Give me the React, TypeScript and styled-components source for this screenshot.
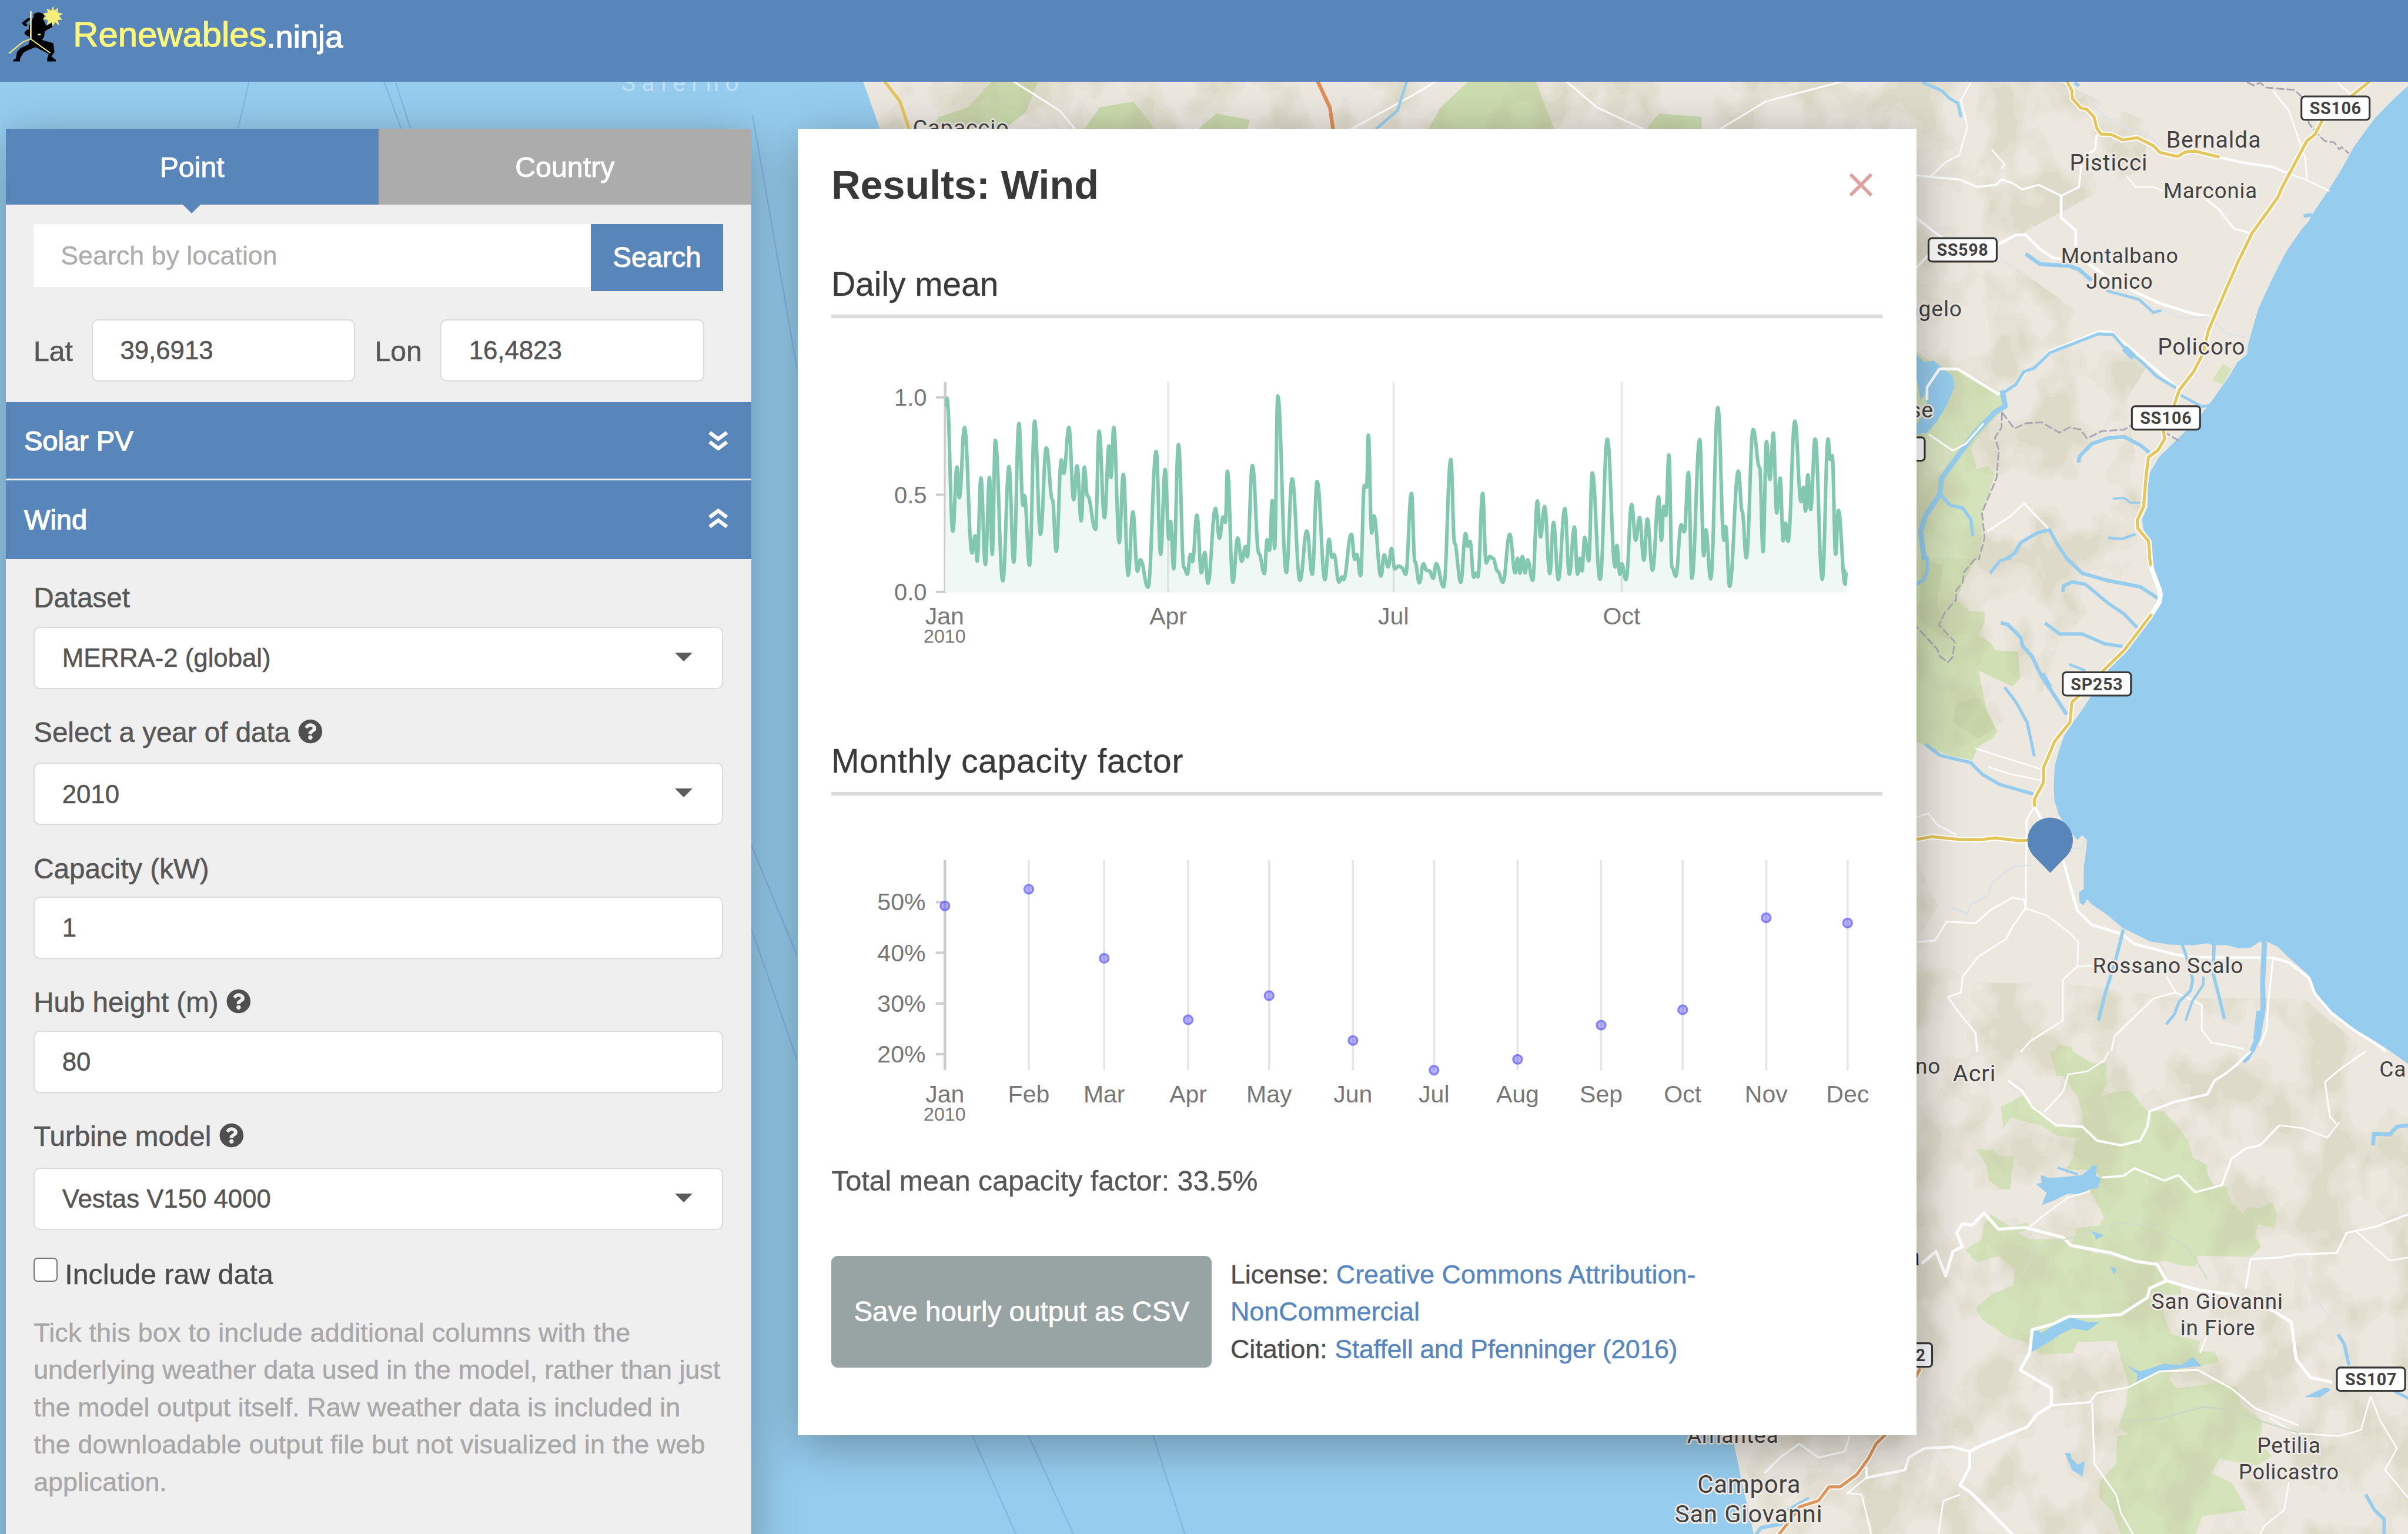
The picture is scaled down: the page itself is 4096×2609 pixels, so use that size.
import React from 'react';
import styled, { createGlobalStyle, css } from 'styled-components';
import { FaQuestionCircle } from 'react-icons/fa';

/* One design unit is 1/1568 of the page width. */
const UNIT = 4096 / 1568;
const u = (n: number) => `${(n * UNIT).toFixed(2)}px`;

const BLUE = '#5886ba';
const SANS = '"Liberation Sans", Arial, sans-serif';
const MAP_FONT = 'Roboto, "Open Sans", sans-serif';

const GlobalStyle = createGlobalStyle`
  * { box-sizing: border-box; }
  html, body { margin: 0; padding: 0; overflow: hidden; }
  body { font-family: ${SANS}; font-size: ${u(18.4)}; line-height: ${u(24.3)}; color: #575757; background: #96cdee; }
`;

const Page = styled.div`
  position: relative;
  width: 4096px;
  height: 2609px;
  overflow: hidden;
  display: flex;
  flex-direction: column;
`;

const MapCanvas = styled.svg`
  position: absolute;
  inset: 0;
  width: 100%;
  height: 100%;
`;

const TopBar = styled.header`
  position: relative;
  flex: none;
  height: ${u(53.2)};
  background: ${BLUE};
  display: flex;
  align-items: flex-start;
`;

const Logo = styled.svg`
  width: ${u(47.6)};
  height: ${u(53.2)};
  flex: none;
`;

const Brand = styled.div`
  padding-top: ${u(7.5)};
  line-height: ${u(30)};
  color: #fbf77c;
  font-size: ${u(22.9)};
  -webkit-text-stroke: ${u(0.45)} #fbf77c;
`;

const BrandSuffix = styled.span`
  position: relative;
  top: ${u(1)};
  color: #fff;
  font-size: ${u(20.8)};
  -webkit-text-stroke: ${u(0.45)} #fff;
`;

const Workspace = styled.main`
  position: relative;
  flex: 1;
  min-height: 0;
  display: flex;
  align-items: flex-start;
  padding: ${u(30.5)} 0 0 ${u(3.7)};
  gap: ${u(30.2)};
`;

const floating = css`
  box-shadow: 0 ${u(7)} ${u(30)} rgba(0, 0, 0, 0.31);
`;

const Sidebar = styled.aside`
  ${floating}
  width: ${u(485.5)};
  height: ${u(940)};
  flex: none;
  background: #efefef;
  display: flex;
  flex-direction: column;
`;

const Tabs = styled.nav`
  display: grid;
  grid-template-columns: 1fr 1fr;
  height: ${u(49.7)};
  flex: none;
`;

const Tab = styled.div<{ $active?: boolean }>`
  position: relative;
  display: flex;
  align-items: center;
  justify-content: center;
  padding-top: ${u(0.6)};
  color: #fff;
  background: ${(p) => (p.$active ? BLUE : '#acacac')};
  font-size: ${u(18.5)};
  -webkit-text-stroke: ${u(0.35)} #fff;
  ${(p) =>
    p.$active &&
    css`
      &::after {
        content: '';
        position: absolute;
        top: 100%;
        left: 50%;
        margin-left: ${u(-5.9)};
        border: ${u(5.9)} solid transparent;
        border-top-color: ${BLUE};
        border-bottom: 0;
      }
    `}
`;

const Location = styled.section`
  padding: ${u(12.4)} ${u(18.4)} ${u(13.7)} ${u(18.1)};
`;

const SearchRow = styled.div`
  display: flex;
  align-items: flex-start;
  margin-bottom: ${u(18.3)};
`;

const SearchField = styled.div`
  flex: 1;
  height: ${u(40.9)};
  padding: 0 ${u(17.7)};
  display: flex;
  align-items: center;
  background: #fff;
  color: #acacac;
  font-size: ${u(17.15)};
  -webkit-text-stroke: ${u(0.1)} #acacac;
`;

const SearchButton = styled.div`
  width: ${u(86)};
  height: ${u(43.7)};
  display: flex;
  align-items: center;
  justify-content: center;
  background: ${BLUE};
  color: #fff;
  font-size: ${u(18.2)};
  -webkit-text-stroke: ${u(0.4)} #fff;
`;

const CoordRow = styled.div`
  display: flex;
  align-items: center;
`;

const CoordLabel = styled.label<{ $width: number; $gap?: number }>`
  width: ${(p) => u(p.$width)};
  margin-left: ${(p) => u(p.$gap ?? 0)};
  padding-top: ${u(1.6)};
  white-space: nowrap;
  -webkit-text-stroke: ${u(0.22)} #575757;
`;

const Field = styled.div<{ $width?: number }>`
  width: ${(p) => (p.$width ? u(p.$width) : '100%')};
  height: ${u(40.5)};
  padding: 0 ${u(18.9)} 0 ${u(17.8)};
  display: flex;
  align-items: center;
  justify-content: space-between;
  background: #fff;
  border: ${u(1.1)} solid #dcdcdc;
  border-radius: ${u(4.2)};
  color: #555;
  font-size: ${u(16.75)};
  -webkit-text-stroke: ${u(0.2)} #555;
`;

const Caret = styled.span`
  border: ${u(5.9)} solid transparent;
  border-top: ${u(6)} solid #5c5c5c;
  border-bottom: 0;
  margin-bottom: ${u(1.3)};
`;

const SectionHead = styled.div<{ $h: number }>`
  height: ${(p) => u(p.$h)};
  flex: none;
  padding: ${u(0.8)} ${u(14.6)} 0 ${u(12)};
  display: flex;
  align-items: center;
  justify-content: space-between;
  background: ${BLUE};
  color: #fff;
  font-size: ${u(18)};
  -webkit-text-stroke: ${u(0.5)} #fff;
  & + & {
    margin-top: ${u(1.4)};
    padding-top: 0;
  }
`;

const ChevronIcon = styled.svg`
  width: ${u(13.6)};
  height: ${u(13.2)};
  margin-top: ${u(-1)};
`;

const Form = styled.section`
  padding: ${u(13)} ${u(18.5)} 0 ${u(18.2)};
`;

const FormGroup = styled.div`
  margin-bottom: ${u(16)};
`;

const Label = styled.label<{ $gap: number }>`
  display: flex;
  align-items: center;
  height: ${u(24.3)};
  margin-bottom: ${(p) => u(p.$gap)};
  gap: ${u(5.3)};
  padding-top: ${u(0.4)};
  font-size: ${u(18.2)};
  white-space: nowrap;
  -webkit-text-stroke: ${u(0.22)} #575757;
  & svg {
    width: ${u(16)};
    height: ${u(16)};
    color: #4f4f4f;
    margin-top: ${u(-1.6)};
  }
`;

const CheckRow = styled.label`
  display: flex;
  align-items: flex-start;
  gap: ${u(4.6)};
  padding-top: ${u(1)};
  color: #4b4b4b;
  font-size: ${u(18.5)};
  -webkit-text-stroke: ${u(0.15)} #4b4b4b;
`;

const CheckBox = styled.span`
  width: ${u(15.7)};
  height: ${u(15.7)};
  margin-top: ${u(1.2)};
  background: #fff;
  border: ${u(1.1)} solid #767676;
  border-radius: ${u(2.6)};
`;

const Help = styled.p`
  margin: ${u(13.5)} 0 0;
  color: #a8a8a8;
  font-size: ${u(17.15)};
  -webkit-text-stroke: ${u(0.2)} #a8a8a8;
`;

const HelpLine = styled.span<{ $track: number }>`
  display: block;
  white-space: nowrap;
  letter-spacing: ${(p) => u(p.$track)};
`;

const Card = styled.section`
  ${floating}
  width: ${u(728.5)};
  height: ${u(850.6)};
  flex: none;
  padding: ${u(21.8)} ${u(22)} 0 ${u(22)};
  background: #fff;
`;

const CardHead = styled.div`
  display: flex;
  align-items: center;
  justify-content: space-between;
  height: ${u(30)};
  padding-right: ${u(6.4)};
  margin-bottom: ${u(38)};
`;

const CardTitle = styled.h2`
  margin: 0;
  font-size: ${u(26.15)};
  font-weight: bold;
  color: #383838;
`;

const CloseIcon = styled.svg`
  width: ${u(15.6)};
  height: ${u(15.6)};
`;

const ChartTitle = styled.h4<{ $track?: number }>`
  margin: 0;
  padding-bottom: ${u(7.5)};
  border-bottom: ${u(2.5)} solid #dadada;
  font-size: ${u(21.75)};
  line-height: ${u(24)};
  letter-spacing: ${(p) => u(p.$track ?? 0)};
  font-weight: normal;
  color: #3a3a3a;
  -webkit-text-stroke: ${u(0.15)} #3a3a3a;
`;

const Chart = styled.svg`
  display: block;
  width: 100%;
  font-family: ${SANS};
`;

const Total = styled.p`
  margin: 0 0 ${u(36.4)};
  font-size: ${u(18.5)};
  -webkit-text-stroke: ${u(0.15)} #575757;
`;

const Actions = styled.div`
  display: flex;
  gap: ${u(12.1)};
`;

const SaveButton = styled.div`
  width: ${u(247.7)};
  height: ${u(72.8)};
  display: flex;
  align-items: center;
  justify-content: center;
  border-radius: ${u(4.2)};
  background: #98a4a3;
  color: #fff;
  font-size: ${u(18.2)};
  -webkit-text-stroke: ${u(0.25)} #fff;
`;

const Credits = styled.div`
  width: ${u(330)};
  color: #4c4c4c;
  font-size: ${u(17.2)};
`;

const CreditLine = styled.div`
  white-space: nowrap;
  -webkit-text-stroke: ${u(0.15)};
`;

const Link = styled.span<{ $track?: number }>`
  color: #5586bf;
  letter-spacing: ${(p) => u(p.$track ?? 0)};
`;

/* ---------- chart data ---------- */

type Pt = [number, number];

const pairs = (s: string): Pt[] => s.trim().split(/\s+/).map((p) => p.split(',').map(Number) as Pt);

const DAILY_FIRST = pairs(`281,250 284,203 301,870 313,548 320,702 335,350 357,978 366,892 372,1020 383,603 396,1036 408,600
416,985 425,415 447,1118 465,545 479,1025 494,330 506,740 510,690 525,1040 540,318 557,885 574,452 592,712 603,970 618,512
625,580 640,350 654,712 664,542 676,818 685,548 694,690 718,860 728,368 744,802 757,442 763,600 771,350 787,926 799,585
813,1090 827,772 840,1070 849,1012 871,1150 895,470 908,985 921,560 932,908 937,820 946,1058 960,435 976,1050 986,1085
995,985 1001,1022 1014,788 1027,1078 1037,975 1046,1130 1068,755 1080,905 1090,798 1097,825 1103,568 1119,1125 1133,903
1145,1020 1156,945 1161,998 1176,540 1195,980 1211,1082 1219,912 1226,965 1234,715 1241,955 1250,192 1275,1076 1292,607
1315,1115 1335,868 1351,1085 1365,620 1388,1112 1400,910 1408,1000 1414,985 1429,1125 1437,1098 1442,1112 1465,885
1475,1010 1481,985 1492,1092 1503,640`);

const DAILY_SECOND = pairs(`7,648 12,388 22,878 28,792 49,1095 58,988 70,1048 80,955 89,1058 101,1043 110,1052 121,1085
138,680 148,1020 161,1128 173,1032 182,1065 190,1068 202,1105 210,1032 232,1148 253,510 264,930 282,1125 296,880 303,945
309,920 320,1100 326,1080 332,1098 346,680 356,1028 367,995 376,1005 390,1070 405,1125 425,885 441,1078 448,1005 455,1080
462,995 470,1078 477,1012 492,1115 506,718 515,898 527,745 542,1082 553,825 567,1112 586,755 599,1085 614,848 623,1085
630,1005 636,1068 644,900 656,1018 666,577 689,1110 710,408 733,1048 738,940 747,1085 752,1032 765,1112 781,735 793,915
804,800 817,1015 827,808 842,1065 860,697 868,915 875,745 881,790 890,487 899,1050 910,1095 926,837 935,872 947,575
957,1105 980,410 992,992 998,862 1012,1108 1033,250 1051,915 1056,845 1067,1145 1093,568 1104,770 1116,1002 1136,360
1155,550 1165,972 1175,420 1185,610 1195,378 1205,778 1215,604 1224,918 1231,828 1238,920 1258,318 1276,722 1283,650
1289,768 1296,587 1304,760 1317,408 1338,1110 1355,408 1361,510 1367,490 1377,985 1385,765 1405,1135 1408,1068`);

const DAILY: Pt[] = [
  ...DAILY_FIRST.map(([x, y]): Pt => [553.45 + x * 0.22293, 233.03 + y * 0.13004]),
  ...DAILY_SECOND.map(([x, y]): Pt => [888.43 + x * 0.22293, 233.03 + y * 0.13004]),
];

/* Eases between turning points so that each of them has a level tangent. */
const smooth = (pts: Pt[]) =>
  pts.reduce((d, [x, y], i) => {
    if (i === 0) return `M${x.toFixed(2)},${y.toFixed(2)}`;
    const [px, py] = pts[i - 1];
    const c = (x - px) * 0.42;
    return `${d}C${(px + c).toFixed(2)},${py.toFixed(2)} ${(x - c).toFixed(2)},${y.toFixed(2)} ${x.toFixed(2)},${y.toFixed(2)}`;
  }, '');

const MONTHS: { name: string; x: number; y: number }[] = [
  { name: 'Jan', x: 615.4, y: 589.7 },
  { name: 'Feb', x: 670, y: 578.8 },
  { name: 'Mar', x: 719.1, y: 623.8 },
  { name: 'Apr', x: 773.8, y: 663.8 },
  { name: 'May', x: 826.5, y: 648.1 },
  { name: 'Jun', x: 881.1, y: 677.3 },
  { name: 'Jul', x: 933.9, y: 696.6 },
  { name: 'Aug', x: 988.3, y: 689.6 },
  { name: 'Sep', x: 1042.7, y: 667.3 },
  { name: 'Oct', x: 1095.8, y: 657.3 },
  { name: 'Nov', x: 1150.2, y: 597.4 },
  { name: 'Dec', x: 1203.2, y: 600.8 },
];

const DailyChart = () => {
  const line = smooth(DAILY);
  return (
    <Chart viewBox="541.4 207.3 684.5 276.7">
      <g fill="#777" fontSize="15.7">
        {[
          ['1.0', 259],
          ['0.5', 322.3],
          ['0.0', 385.6],
        ].map(([t, y]) => (
          <g key={t}>
            <line x1="609.4" x2="615.6" y1={y} y2={y} stroke="#ccc" strokeWidth="1.5" />
            <text x="603.6" y={Number(y) + 5.5} textAnchor="end" fontSize="15.3">
              {t}
            </text>
          </g>
        ))}
        <line x1="615.6" x2="615.6" y1="248.9" y2="386.3" stroke="#ccc" strokeWidth="1.8" />
        <path d={`${line}L1202.8,385.9L615.6,385.9Z`} fill="#eff8f5" />
        {[760.8, 907.6, 1056.1].map((x) => (
          <line key={x} x1={x} x2={x} y1="248.9" y2="385.9" stroke="#000" strokeOpacity="0.09" strokeWidth="1.4" />
        ))}
        <path d={line} fill="none" stroke="#82c8b1" strokeWidth="2.3" strokeLinejoin="round" />
        <g textAnchor="middle">
          <text x="615.2" y="406.6">Jan</text>
          <text x="615.2" y="418.6" fontSize="12.3">2010</text>
          <text x="760.8" y="406.6">Apr</text>
          <text x="907.5" y="406.6">Jul</text>
          <text x="1056.1" y="406.6">Oct</text>
        </g>
      </g>
    </Chart>
  );
};

const MonthlyChart = () => (
  <Chart viewBox="541.4 517.9 684.5 239.2">
    <g fill="#777" fontSize="15.7">
      {[
        ['50%', 587.3],
        ['40%', 620.3],
        ['30%', 653.3],
        ['20%', 686.3],
      ].map(([t, y]) => (
        <g key={t}>
          <line x1="609.4" x2="615.6" y1={y} y2={y} stroke="#ccc" strokeWidth="1.6" />
          <text x="602.8" y={Number(y) + 5.4} textAnchor="end">
            {t}
          </text>
        </g>
      ))}
      {MONTHS.map((m, i) => (
        <g key={m.name} textAnchor="middle">
          <line x1={m.x} x2={m.x} y1="559.8" y2="696.8" stroke={i ? '#e5e5e5' : '#ccc'} strokeWidth={i ? 1.4 : 1.8} />
          <circle cx={m.x} cy={m.y + 0.1} r="2.9" fill="#0000ff" fillOpacity="0.3" stroke="#6a62f7" strokeOpacity="0.75" strokeWidth="1.2" />
          <text x={m.x} y="717.6">
            {m.name}
          </text>
        </g>
      ))}
      <text x="615.2" y="729.6" fontSize="12.3" textAnchor="middle">
        2010
      </text>
    </g>
  </Chart>
);

/* ---------- map ---------- */

const EAST_SEA_NORTH =
  '1568,60 1520,105 1468,160 1435,205 1400,255 1360,330 1320,395 1270,472 1262,490 1240,515 1190,590 1150,670 1105,770 1088,830 1073,885 1070,915 1040,940 1015,985 960,1065 910,1130 880,1160 830,1210 800,1240 770,1290 762,1340 763,1400 745,1440 750,1475 775,1510 779,1568 1568,1568';
const EAST_SEA_SOUTH =
  '779,-2 785,50 800,95 812,110 802,140 780,172 745,225 700,290 650,340 620,390 585,440 560,480 535,515 505,560 488,610 475,660 472,720 474,770 488,815 510,850 535,882 545,895 560,880 575,895 572,930 565,980 565,1050 550,1062 552,1095 565,1103 575,1083 590,1100 640,1135 685,1175 700,1182 770,1218 830,1228 900,1230 950,1224 965,1230 1010,1230 1045,1240 1080,1238 1110,1218 1118,1224 1130,1218 1165,1235 1200,1270 1260,1325 1275,1370 1310,1420 1380,1485 1440,1520 1500,1558 1568,1608 1568,-2';

const Labels: [string, number, number, number, ('start' | 'middle' | 'end')?][] = [
  ['Bernalda', 1441.5, 96.2, 15],
  ['Pisticci', 1373.1, 111.1, 14.8],
  ['Marconia', 1439.4, 129.1, 14],
  ['Montalbano', 1380.3, 171, 13.7],
  ['Jonico', 1380.2, 187.8, 13.8],
  ["Sant'Angelo", 1277.8, 206.1, 14.2, 'end'],
  ['Policoro', 1433.6, 230.7, 14.8],
  ['Senise', 1259, 271.7, 14.2, 'end'],
  ['Rossano Scalo', 1411.8, 633.6, 14.2],
  ['Bisignano', 1263.8, 698.9, 14.2, 'end'],
  ['Acri', 1285.7, 703.9, 15.2],
  ['Ca', 1549.3, 700.9, 14.2, 'start'],
  ['San Giovanni', 1443.9, 852.3, 14.1],
  ['in Fiore', 1444.2, 869.3, 14.1],
  ['Petilia', 1490.5, 946.1, 14.2],
  ['Policastro', 1490.5, 963.1, 13.8],
  ['Amantea', 1128.4, 939.3, 14.2],
  ['Campora', 1139, 972.1, 16],
  ['San Giovanni', 1138.8, 991.2, 15.9],
  ['Capaccio', 625.8, 88, 14.4],
];

const Shields: [string, number, number][] = [
  ['SS106', 1498, 62.2],
  ['SS598', 1255.2, 154.5],
  ['SS106', 1387.6, 263.9],
  ['SP253', 1342.6, 437.1],
  ['SS107', 1521.1, 889.8],
  ['SS653', 1208.3, 284.2],
];

const Water = ({ d, w = 2.4 }: { d: string; w?: number }) => (
  <polyline points={d} fill="none" stroke="#96cdee" strokeWidth={w * UNIT} strokeLinejoin="round" vectorEffect="non-scaling-stroke" />
);

const Road = ({ d, w = 1, c = '#fff' }: { d: string; w?: number; c?: string }) => (
  <polyline points={d} fill="none" stroke={c} strokeWidth={w * UNIT} strokeLinejoin="round" vectorEffect="non-scaling-stroke" />
);

const Highway = ({ d, c = '#e5c65c' }: { d: string; c?: string }) => (
  <>
    <Road d={d} w={3.6} />
    <Road d={d} w={2} c={c} />
  </>
);

const Border = ({ d }: { d: string }) => (
  <polyline points={d} fill="none" stroke="#a9a6b4" strokeWidth={1.1 * UNIT} strokeDasharray="14 4" vectorEffect="non-scaling-stroke" />
);

const BaseMap = () => (
  <MapCanvas viewBox="0 0 1568 998.8" preserveAspectRatio="none">
    <defs>
      <filter id="relief" x="0" y="0" width="100%" height="100%" colorInterpolationFilters="sRGB">
        <feTurbulence type="fractalNoise" baseFrequency="0.034 0.026" numOctaves="3" seed="11" />
        <feColorMatrix values="0 0 0 0 0.76  0 0 0 0 0.75  0 0 0 0 0.62  3.2 0 0 0 -1.25" />
        <feComponentTransfer>
          <feFuncA type="discrete" tableValues="0 0.09 0.17 0.24 0.33" />
        </feComponentTransfer>
      </filter>
      <clipPath id="hills">
        <polygon points="562,53 1340,53 1400,80 1395,110 1320,150 1300,165 1370,215 1400,235 1385,260 1395,330 1390,365 1340,420 1330,450 1290,480 1248,500 1248,560 1262,590 1250,610 1280,640 1340,640 1420,650 1500,650 1560,700 1568,720 1568,999 1150,999 1130,934 570,90" />
      </clipPath>
    </defs>

    <rect width="1568" height="999" fill="#ece8e0" />

    {/* woodland behind the top edge */}
    <g fill="#cbdcae">
      <path d="M604,84l8,-8 18,-6 16,-17h30l-8,20 -14,11zM706,84l10,-14 22,-4 14,18zM780,84l12,-10 22,4 -2,6zM930,84l8,-14 18,-17h44l12,31zM1072,84l8,-10 28,2v8z" />
    </g>

    <g transform="translate(1237.98 43.69) scale(.21048 .20435)">
      <polygon fill="#d4e3ba" points="0,900 47,905 120,962 175,962 310,1045 325,1085 260,1150 215,1215 235,1280 270,1272 290,1295 270,1365 248,1420 252,1480 240,1570 0,1570" />
      <polygon fill="#d4e3ba" points="995,945 1022,962 995,1012 962,998" />
      <polygon fill="#dfe6c9" points="0,1180 110,1180 160,1225 130,1290 60,1400 0,1420" opacity=".5" />
    </g>
    <g transform="translate(1237.98 364.1) scale(.21048 .20435)">
      <polygon fill="#d0dfb4" points="0,-2 230,-2 195,70 170,130 185,140 210,165 258,168 258,200 240,240 280,270 290,290 362,295 368,380 345,405 300,385 240,355 248,400 262,470 285,520 297,550 280,572 240,595 220,640 150,625 110,610 0,560" />
      <polygon fill="#c2d2a4" points="60,0 130,20 110,140 150,260 60,200" opacity=".6" />
      <polygon fill="#c2d2a4" points="170,460 240,440 290,540 240,570 160,520" opacity=".6" />
      <polygon fill="#d4e3ba" points="485,1545 530,1555 530,1568 475,1568" />
    </g>
    <g transform="translate(1077.8 684.5) scale(.31265 .20045)">
      <g fill="#d4e3ba">
        <polygon points="822,0 870,0 905,35 940,40 940,110 925,150 960,130 990,130 1025,195 1060,195 1085,240 1110,290 1120,345 1150,370 1150,400 1165,440 1190,440 1200,490 1225,530 1232,505 1260,510 1285,490 1295,530 1290,575 1255,560 1250,600 1262,635 1240,668 1170,665 1130,665 1125,700 1095,695 1060,680 1020,690 940,660 865,630 875,595 875,575 925,565 935,540 915,480 905,455 930,410 910,385 855,385 870,345 875,290 890,285 840,275 800,240 740,215 725,250 720,180 765,145 800,190 840,240 890,250 890,205 880,150 850,80 835,80" />
        <polygon points="700,530 740,570 775,555 780,575 755,590 780,610 850,610 865,635 1000,685 1045,695 1070,745 1095,765 1095,790 1055,790 1060,860 1075,920 1135,940 1130,975 1165,975 1175,1010 1140,1020 1080,1035 1070,1065 1085,1095 1180,1075 1215,1095 1220,1150 1265,1200 1262,1240 1255,1265 1285,1315 1255,1345 1175,1325 1158,1370 1200,1400 1215,1440 1232,1490 1140,1510 1125,1570 970,1570 955,1500 925,1450 925,1400 960,1340 962,1250 985,1245 965,1220 980,1150 985,1080 970,1000 960,940 880,945 870,980 800,985 775,945 735,930 680,870 668,835 700,790 745,760 750,710 715,665 670,685 645,645 680,610 685,560" />
        <polygon points="668,318 705,322 715,340 748,342 742,400 740,450 720,448 695,420 690,370" />
      </g>
    </g>

    {/* hill shading */}
    <g clipPath="url(#hills)">
      <rect x="560" y="53" width="1008" height="946" filter="url(#relief)" />
    </g>

    {/* seas */}
    <polygon fill="#96cdee" points="0,53 562,53 573,84 700,500 1127.8,934 1134,964 1142,999 0,999" />
    <g transform="translate(1237.98 43.69) scale(.21048 .20435)">
      <polygon fill="#96cdee" points={EAST_SEA_NORTH} />
    </g>
    <g transform="translate(1237.98 364.1) scale(.21048 .20435)">
      <polygon fill="#96cdee" points={EAST_SEA_SOUTH} />
    </g>

    {/* sea routes */}
    <g stroke="#83b3e0" strokeWidth="0.8" fill="none">
      <path d="M162.2,53L154.5,86M250,53L262,86M257.5,53L268,86M490,75L519,240M489,549.8L519,622M489,604L519,690M632.8,934L661.6,999M669.4,934L699,999M750.6,934L771.6,999" />
    </g>

    {/* northern strip */}
    <g fill="none" strokeLinejoin="round">
      <path d="M576,53L586,66 592,84" stroke="#e5c65c" strokeWidth="2" />
      <path d="M858,53L866,70 868,84" stroke="#dd8f56" strokeWidth="2.4" />
      <path d="M880,84L920,62 935,53M1020,53L1040,70 1070,84M660,53L690,72 700,84M1120,84L1150,66 1200,53" stroke="#fff" strokeWidth="1.2" />
      <path d="M896,84L910,72 916,53" stroke="#96cdee" strokeWidth="1.8" />
    </g>

    {/* north east */}
    <g transform="translate(1237.98 43.69) scale(.21048 .20435)">
      <g fill="#96cdee">
        <polygon points="47,915 70,940 100,935 160,985 165,1020 140,1080 110,1130 80,1165 47,1170 47,1140 75,1100 85,1030 60,1060 47,985" />
      </g>
      <polyline points="80,1060 80,1020 118,962 175,962 300,1042 355,1015 385,970 410,960 460,905 615,842 650,845 855,1022" fill="none" stroke="#fff" strokeWidth="4.6" vectorEffect="non-scaling-stroke" />
      <Water d="65,48 125,75 150,100 175,115 185,160" w={2} />
      <Water d="385,595 430,628 520,633 550,645 590,680" w={2.6} />
      <Water d="635,712 680,725 735,740 780,782 805,775" w={1.8} />
      <Water d="312,1040 355,1012 380,970 410,960 460,910 610,850 655,852 700,905 740,935 790,985 850,1022" w={2} />
      <Water d="690,895 720,925" w={4.4} />
      <Water d="312,1030 322,1080 290,1100 225,1170 175,1240 125,1310 120,1360 75,1430 60,1480 72,1570" w={3.4} />
      <Water d="120,1360 150,1395 190,1405 215,1440 222,1495" w={2.2} />
      <Water d="548,1260 552,1240 590,1200 640,1182 690,1178 740,1205 768,1228" w={2.4} />
      <Water d="320,1570 350,1550 370,1515 420,1485 458,1473 480,1515 515,1570" w={2.2} />
      <Water d="640,1500 685,1503 725,1488" w={1.8} />
      <Water d="655,1375 690,1373 710,1388 738,1388" w={1.4} />
      <Water d="865,1045 900,1065 930,1082 960,1076" w={1.8} />
      <Water d="1245,475 1270,470" w={2.4} />
      <Water d="537,50 550,60" w={2.2} />
      <Road d="215,50 185,105 205,190 180,280 135,305 90,350" />
      <Road d="47,345 90,350 180,358 235,382 295,375 310,358 345,370 375,390 425,375 495,410 550,382 560,290 600,262 605,215" w={1.3} />
      <Road d="495,410 495,480 540,520 540,570" w={1.8} />
      <Road d="47,480 115,535 130,545" w={1.6} />
      <Road d="47,640 82,600" w={1.2} />
      <Road d="300,565 355,535 385,535 430,580 470,608 570,620 640,670 720,715 800,752 900,785 955,795" w={1.8} />
      <Road d="980,287 1060,305 1150,318 1195,338" w={1.6} />
      <Road d="1195,338 1255,360 1325,395" />
      <Road d="1150,75 1200,140 1230,230 1250,290 1255,360" />
      <Road d="1350,50 1400,95" />
      <Road d="935,415 980,450 1030,515 1085,530" w={1.3} />
      <Road d="695,345 725,382 780,382 810,395" />
      <Road d="280,262 320,310 310,325" />
      <Road d="85,1170 160,1222 200,1200 255,1135" w={1.2} />
      <Road d="265,1480 340,1430 380,1390 455,1470" w={1.2} />
      <Road d="560,80 620,150 680,190 760,215 800,250" c="#dce3e8" w={0.9} />
      <Road d="800,770 870,800 950,795 1010,850 1070,860" c="#dce3e8" w={0.9} />
      <Border d="1070,48 1090,58 1110,50 1130,65 1180,70 1215,72 1240,95 1262,180 1285,210 1310,235 1340,240 1355,262 1362,255 1385,275" />
      <Border d="312,1100 350,1152 385,1135 435,1132 490,1165 520,1148 555,1155 575,1183 620,1160 690,1155 715,1140" />
      <Border d="810,1160 858,1190" />
      <Border d="312,1100 310,1150 290,1180 302,1220 295,1310 250,1420 258,1500 240,1570" />
      <Highway d="513,45 528,75 530,100 555,130 575,135 597,160 605,195 618,213 650,215 685,232 730,225 780,250 800,272 855,285 880,270 910,268 985,287" />
      <Highway d="1450,45 1390,95 1350,130 1305,165 1280,215 1255,235 1180,380 1165,415 1085,530 1040,625 950,840 935,910 905,970 860,1030 840,1090 812,1160 815,1185 795,1220 765,1243 758,1300 750,1400 730,1445 732,1470 765,1510 770,1570" />
    </g>

    {/* gulf coast */}
    <g transform="translate(1237.98 364.1) scale(.21048 .20435)">
      <Water d="80,-10 80,40 70,65 47,80" w={2.2} />
      <Water d="275,45 305,5 340,-5" w={2} />
      <Water d="510,-5 560,45 640,68 740,88 795,125" w={2.4} />
      <Water d="500,105 502,85 530,72 570,80 640,140 690,175 730,218" w={2.2} />
      <Water d="445,203 490,238 560,238 630,270 685,278" w={2.2} />
      <Water d="308,203 330,208 370,250 375,275 405,310 430,365 465,420 512,495" w={2.4} />
      <Water d="435,365 460,410" w={3.6} />
      <Water d="520,335 570,355" w={1.8} />
      <Water d="320,408 355,455 390,520 412,628" w={2} />
      <Water d="75,590 120,625 215,648 250,685 305,718 408,748" w={2.2} />
      <Road d="47,822 85,810 110,845 170,878" />
      <Road d="230,603 430,668" />
      <Road d="270,662 340,685 435,705" />
      <Road d="412,788 388,830 385,1112 345,1170 325,1210 240,1265 190,1330 185,1380 145,1395 175,1440 230,1510 235,1570" w={1.2} />
      <Road d="385,1112 380,1085 345,1078 280,1115 230,1160 140,1155 105,1215 50,1220" w={1.2} />
      <Road d="385,1112 450,1135 515,1185 548,1220 545,1298 590,1295" />
      <Road d="545,1298 500,1340 500,1470 400,1535 370,1570" w={1.1} />
      <Road d="412,788 440,840 490,920 520,1030 545,1120 590,1165 685,1195 720,1225 840,1258 900,1268 1150,1270 1200,1285 1262,1335 1280,1385 1330,1445 1400,1500 1470,1545 1500,1568" w={1.8} />
      <Road d="1150,1275 1135,1420 1130,1500 1110,1550" w={1.3} />
      <Road d="820,1330 850,1380 780,1400 660,1520 650,1568" w={1.1} />
      <Road d="850,1380 930,1420 930,1500 960,1540 1060,1560" w={1.1} />
      <Road d="408,975 350,978 280,1030 270,1070 215,1100 205,1130 155,1110" c="#d6e2e8" w={0.8} />
      <Road d="530,922 560,920 570,895" c="#d6e2e8" w={0.8} />
      <Water d="687,1180 680,1210 660,1290 632,1380 610,1470" w={2.2} />
      <Water d="870,1228 890,1290 902,1340 895,1375 860,1410 845,1450 820,1482" w={2} />
      <Water d="935,1330 935,1355 900,1410 880,1470" w={1.6} />
      <Water d="968,1228 965,1320 985,1400 1000,1465" w={2.2} />
      <Water d="1124,1220 1118,1350 1120,1430 1105,1520 1085,1568" w={3.4} />
      <Water d="1110,1440 1100,1530" w={4.6} />
      <Border d="230,-2 195,40 190,75 170,100 170,130 135,170 117,210 165,262 160,310 145,328 120,310 110,285 47,215" />
      <Highway d="768,-10 772,22" />
      <Road d="772,22 800,100 800,135 775,175" w={3} />
      <Highway d="775,175 690,290 625,355 545,440 528,455 522,520 475,580 440,665 440,712 412,765 412,788" />
      <Highway d="47,893 95,884 180,893 250,893 290,888 365,897 400,895" />
    </g>

    {/* Sila plateau */}
    <g transform="translate(1077.8 684.5) scale(.31265 .20045)">
      <g fill="#96cdee">
        <polygon points="793,430 805,428 803,402 820,412 850,408 890,402 912,370 920,372 918,405 928,412 922,445 905,448 885,465 860,462 830,485 805,500 815,460 800,440" />
        <polygon points="903,578 920,590 935,598 918,612 915,598" />
        <polygon points="948,698 962,708 955,725" />
        <polygon points="790,902 805,915 850,870 870,865 900,880 927,878 900,908 870,900 845,918 820,945 780,980" />
        <polygon points="983,1022 1010,1040 1060,1015 1095,1020 1120,993 1138,1022 1090,1030 1055,1038 1002,1073 1005,1050" />
        <polygon points="853,1305 864,1305 868,1325 880,1342 895,1330 890,1382 868,1360" />
        <polygon points="1352,1123 1395,1092 1408,1098 1385,1124" />
        <polygon points="1505,-2 1535,-2 1568,28 1570,-2" />
      </g>
      <Water d="838,378 880,400" w={1.6} />
      <Water d="1495,305 1497,268 1530,270 1545,245 1570,240" w={2.6} />
      <Water d="1422,920 1435,950 1445,1020" w={2.2} />
      <Water d="1480,1440 1498,1490 1518,1520 1518,1570" w={2.2} />
      <Water d="1225,35 1235,22 1243,0" w={2.4} />
      <Water d="1540,1105 1570,1128" w={2} />
      <Water d="210,1570 220,1548 280,1530" w={2.4} />
      <Water d="275,1490 320,1450" w={1.6} />
      <Road d="735,95 765,130 785,180 835,240 890,245 920,290 970,305 1010,290 1025,245 1030,195 1080,165 1150,140 1165,95 1190,70 1210,45 1240,0" w={1.6} />
      <Road d="810,198 850,130 860,75 900,65 935,30 945,0" w={1} />
      <Road d="930,410 975,405 998,380 1060,420 1090,402 1125,458 1180,435 1200,350 1230,315 1260,305 1300,240" w={1.4} />
      <Road d="780,570 820,520 860,475 905,455" w={1} />
      <Road d="555,690 585,650 605,730 620,650 640,635 628,590 640,560 660,565 685,525 715,578 770,572 850,605 865,630 950,655 1000,682 1045,692 1065,745 1130,775 1200,790 1290,845 1325,880 1335,1000 1365,1060 1410,1075" w={2} />
      <Road d="1065,745 1030,770 1025,800 970,855 925,860 860,862 830,885 785,905 780,980 760,1035 825,1095 825,1150 795,1180 775,1220 680,1280 655,1300 655,1350 635,1410 655,1430 700,1500 745,1570" w={2} />
      <Road d="655,1300 620,1285 560,1290 528,1320 520,1360 440,1385 440,1350" w={1.8} />
      <Road d="825,1150 905,1140 920,1110 985,1092 1050,1040 1130,1035 1200,1095 1250,1160 1340,1215" w={1.2} />
      <Road d="910,1140 915,1340 960,1440 970,1500 995,1568" w={1.1} />
      <Road d="440,1385 400,1435 430,1440 450,1568" w={1} />
      <Road d="228,1370 260,1320 300,1275 340,1320 395,1300 405,1250" w={1.3} />
      <Road d="635,1440 600,1460 590,1568" w={1} />
      <Road d="1230,770 1240,675 1300,670 1335,660 1420,655 1440,590 1500,570 1568,530" w={1.3} />
      <Road d="1460,585 1530,680 1568,670" w={1} />
      <Road d="1480,0 1425,60 1395,100 1405,210 1418,235" w={1.2} />
      <Road d="1300,240 1350,250 1400,280 1425,230" w={1} />
      <Road d="1490,1120 1470,1230 1425,1250 1330,1240 1280,1190" w={1} />
      <Road d="1490,1120 1510,1200 1545,1290 1520,1360 1568,1450" w={1} />
      <Road d="1320,1400 1310,1490 1270,1540 1260,1568" w={1} />
      <Road d="1150,920 1135,980" w={1} />
      <Road d="765,730 790,640 900,590 960,555 1040,570 1110,640 1150,740" c="#cfdcc6" w={0.9} />
      <Road d="1350,700 1375,800 1430,920" c="#dfe2e2" w={0.9} />
      <Road d="975,1205 1060,1190 1140,1155 1200,1165 1260,1200 1340,1240" c="#c8d6c2" w={0.9} />
      <Highway d="255,1575 285,1515 300,1480 340,1460 362,1415 385,1415 420,1375 445,1320 460,1275 480,1245 552,1030" c="#e0965c" />
    </g>

    {/* road shields */}
    <g fontFamily={MAP_FONT} fontWeight="700">
      {Shields.map(([t, x, y], i) => (
        <g key={i}>
          <rect x={x + 0.6} y={y + 0.6} width="44.4" height="15.2" rx="2.2" fill="#fff" stroke="#383838" strokeWidth="1.2" />
          <text x={x + 22.8} y={y + 12.2} fontSize="11" letterSpacing="0.25" fill="#424242" textAnchor="middle">
            {t}
          </text>
        </g>
      ))}
      <rect x="1243" y="874.6" width="15.1" height="15.3" rx="2.2" fill="#fff" stroke="#383838" strokeWidth="1.2" />
      <text x="1250.6" y="886.3" fontSize="11" fill="#424242" textAnchor="middle">
        2
      </text>
      <text x="1250" y="823.8" fontSize="17" fill="#222" textAnchor="end">
        Cosenza
      </text>
    </g>

    {/* place names */}
    <g fontFamily={MAP_FONT} fill="#424242" stroke="#efeae3" strokeWidth="2.2" strokeLinejoin="round" paintOrder="stroke" letterSpacing="0.35">
      {Labels.map(([t, x, y, size, anchor], i) => (
        <text key={i} x={x} y={y} fontSize={size} textAnchor={anchor ?? 'middle'}>
          {t}
        </text>
      ))}
    </g>
    <text x="404.5" y="59.2" fontFamily={MAP_FONT} fontSize="15.6" letterSpacing="4" fill="#bfe0f5">
      Salerno
    </text>

    {/* selected point */}
    <path d="M1335,568.3L1323.6,556.6A14.8,14.8 0 1 1 1346.4,556.6Z" fill={BLUE} />
  </MapCanvas>
);

/* ---------- icons ---------- */

const NinjaLogo = () => (
  <Logo viewBox="0 0 47.6 53.2">
    <g transform="scale(.16719 .0971)">
      <g fill="none" stroke="#000" strokeLinejoin="round" strokeLinecap="round">
        <path d="M112,128L92,155 100,168" strokeWidth="14" />
        <path d="M110,205L102,222 112,236" strokeWidth="14" />
        <path d="M178,190L200,172" strokeWidth="20" />
      </g>
      <path d="M131,112C128,92 140,82 152,84C166,84 174,98 172,116L170,135 180,172 205,152 208,172 180,204 174,212 172,245 164,268 208,290 212,350 200,378 218,402 218,412 184,412 184,392 190,362 150,326 138,316 112,334 92,352 78,392 78,412 52,412 52,400 62,392 66,350 80,322 110,300 118,262 112,236 98,232 98,212 112,200 112,176 122,140Z" fill="#000" />
      <path d="M120,75V265M120,262L90,280L35,358M120,262L196,356" fill="none" stroke="#f6ee79" strokeWidth="6" />
      <path d="M207,38L211,70L226,52L224,84L246,92L230,106L243,132L226,134L230,170L214,148L206,184L201,150L183,168L186,134L165,128L180,108L166,92L186,84L182,58L200,70Z" fill="#f3ea7c" />
      <ellipse cx="206" cy="110" rx="19" ry="34" fill="#f6ee79" />
      <circle cx="153" cy="232" r="6" fill="#f3ea7c" />
    </g>
  </Logo>
);

const DoubleChevron = ({ up }: { up?: boolean }) => (
  <ChevronIcon viewBox="0 0 13.6 13.2">
    <path
      d="M1.2,1.4L6.8,5.6L12.4,1.4M1.2,7.6L6.8,11.8L12.4,7.6"
      transform={up ? 'rotate(180 6.8 6.6)' : undefined}
      fill="none"
      stroke="#fff"
      strokeWidth="2.4"
    />
  </ChevronIcon>
);

/* ---------- form content ---------- */

type FormField = { label: string; value: string; gap: number; help?: boolean; select?: boolean };

const FIELDS: FormField[] = [
  { label: 'Dataset', value: 'MERRA-2 (global)', gap: 6.9, select: true },
  { label: 'Select a year of data', value: '2010', gap: 7.8, help: true, select: true },
  { label: 'Capacity (kW)', value: '1', gap: 6.4 },
  { label: 'Hub height (m)', value: '80', gap: 6.5, help: true },
  { label: 'Turbine model', value: 'Vestas V150 4000', gap: 8.3, help: true, select: true },
];

const HELP: [string, number][] = [
  ['Tick this box to include additional columns with the', 0.1],
  ['underlying weather data used in the model, rather than just', 0],
  ['the model output itself. Raw weather data is included in', 0.03],
  ['the downloadable output file but not visualized in the web', 0.06],
  ['application.', 0],
];

export default function App() {
  return (
    <Page>
      <GlobalStyle />
      <BaseMap />
      <TopBar>
        <NinjaLogo />
        <Brand>
          Renewables<BrandSuffix>.ninja</BrandSuffix>
        </Brand>
      </TopBar>
      <Workspace>
        <Sidebar>
          <Tabs>
            <Tab $active>Point</Tab>
            <Tab>Country</Tab>
          </Tabs>
          <Location>
            <SearchRow>
              <SearchField>Search by location</SearchField>
              <SearchButton>Search</SearchButton>
            </SearchRow>
            <CoordRow>
              <CoordLabel $width={37.9}>Lat</CoordLabel>
              <Field $width={171.6}>39,6913</Field>
              <CoordLabel $width={42.7} $gap={12.8}>
                Lon
              </CoordLabel>
              <Field $width={171.7}>16,4823</Field>
            </CoordRow>
          </Location>
          <SectionHead $h={49.5}>
            Solar PV
            <DoubleChevron />
          </SectionHead>
          <SectionHead $h={51}>
            Wind
            <DoubleChevron up />
          </SectionHead>
          <Form>
            {FIELDS.map((f) => (
              <FormGroup key={f.label}>
                <Label $gap={f.gap}>
                  {f.label}
                  {f.help && <FaQuestionCircle />}
                </Label>
                <Field>
                  {f.value}
                  {f.select && <Caret />}
                </Field>
              </FormGroup>
            ))}
            <CheckRow>
              <CheckBox />
              Include raw data
            </CheckRow>
            <Help>
              {HELP.map(([text, track]) => (
                <HelpLine key={text} $track={track}>
                  {text}
                </HelpLine>
              ))}
            </Help>
          </Form>
        </Sidebar>
        <Card>
          <CardHead>
            <CardTitle>Results: Wind</CardTitle>
            <CloseIcon viewBox="0 0 15.6 15.6">
              <path d="M1,1L14.6,14.6M14.6,1L1,14.6" stroke="#dea3a1" strokeWidth="2.2" />
            </CloseIcon>
          </CardHead>
          <ChartTitle>Daily mean</ChartTitle>
          <DailyChart />
          <ChartTitle $track={0.3}>Monthly capacity factor</ChartTitle>
          <MonthlyChart />
          <Total>Total mean capacity factor: 33.5%</Total>
          <Actions>
            <SaveButton>Save hourly output as CSV</SaveButton>
            <Credits>
              <CreditLine>
                License: <Link>Creative Commons Attribution-</Link>
              </CreditLine>
              <CreditLine>
                <Link>NonCommercial</Link>
              </CreditLine>
              <CreditLine>
                Citation: <Link $track={-0.17}>Staffell and Pfenninger (2016)</Link>
              </CreditLine>
            </Credits>
          </Actions>
        </Card>
      </Workspace>
    </Page>
  );
}
